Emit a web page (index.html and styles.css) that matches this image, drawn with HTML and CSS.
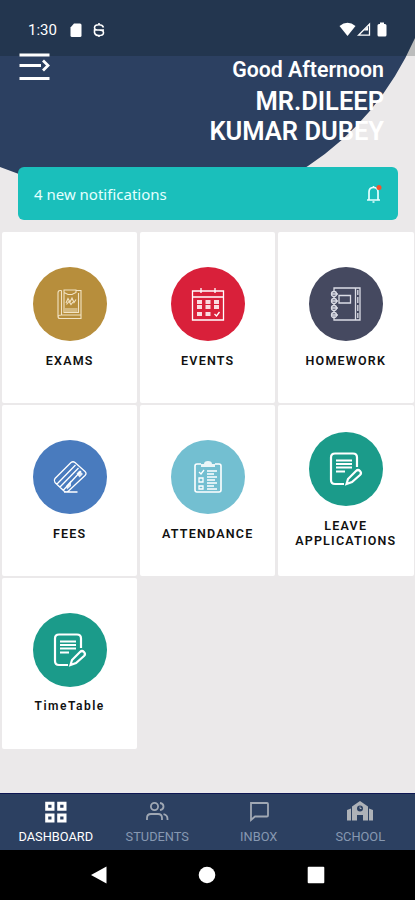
FILE: index.html
```
<!DOCTYPE html>
<html lang="en">
<head>
    <meta charset="UTF-8">
    <meta name="viewport" content="width=device-width, initial-scale=1">
    <title>Dashboard</title>
    <link rel="stylesheet" href="styles.css">
</head>

<body>

<svg class="hero-bg" viewBox="0 0 415 190"><path d="M0 0H415V38Q379 119 308 166Q285 182 250 190H80Q40 183 0 167Z"/></svg>

<div class="status-bar">
    <span class="time">1:30</span>
    <svg class="sd" width="12" height="15" viewBox="0 0 12 15"><path d="M4 0.5H10Q11.5 .5 11.5 2V12.500Q11.500 14 10 14H2Q.5 14 .5 12.500V4.500Z"/></svg>
    <svg class="app" width="12" height="15" viewBox="0 0 12 15"><path d="M10.500 4.500Q9.500 1.800 6 1.800Q1.500 1.800 1.500 4.700Q1.500 7 6 7Q10.500 7 10.500 9.700Q10.500 12.500 6 12.500Q2 12.500 1.500 9.500V7H11M6 0V2M6 12.500V14"/></svg>
    <div class="signals">
        <svg width="48" height="16" viewBox="0 0 48 16">
            <path d="M.5 4Q8.500-2.500 16.500 4L8.500 14Z"/>
            <path class="cell" d="M19.500 13.200L30.500 2V13.200Z"/><path d="M25 8.500L29 4.500V8.500Z"/>
            <path d="M41 .5H45V2H46Q47.500 2 47.500 3.500V13Q47.500 14.500 46 14.500H40Q38.500 14.500 38.500 13V3.500Q38.500 2 40 2H41Z"/>
        </svg>
    </div>
</div>

<header>
    <svg class="menu" width="32" height="30" viewBox="0 0 32 30"><path d="M1.500 3H31.500M1.500 13.500H23M1.500 26.500H31.500M25 8.500L30 13.500L25 18.500"/></svg>
    <div class="greeting">
        <p>Good Afternoon</p>
        <h1>MR.DILEEP<br>KUMAR DUBEY</h1>
    </div>
</header>

<section class="notice">
    <span>4 new notifications</span>
    <svg width="16" height="20" viewBox="0 0 16 20"><path d="M1 16H14M3 16V8Q3 3.500 7.500 3.500Q12 3.500 12 8V16M6.500 18H8.500M7.500 2V3.500"/><circle cx="13" cy="3.500" r="2.500"/></svg>
</section>

<main class="grid">
    <div class="card">
        <div class="icon exams">
            <svg viewBox="0 0 36 36"><path d="M9.500 4.500H8Q6 4.500 6 7V30.500Q6 32.500 8 32.500H29V4.500H24M9.500 4.500V29H29M9.500 29Q6 29 6 31M12 7V26.500H26.500V7M12 4H24V6.500L20 8.500H16L12 6.500ZM14 17L16 12.500L18 16L20 12L22 16.500L24 13.500M14.500 18.500L17 15.500L19 18.500L21 16M13 23H25.500M13 25H25.500"/></svg>
        </div>
        <h3>EXAMS</h3>
    </div>
    <div class="card">
        <div class="icon events">
            <svg viewBox="0 0 36 36"><path d="M2.500 5H33.500V34H2.500ZM2.500 11H33.500M11 2V7M25 2V7"/><path class="fill" d="M7 14h5v4H7zM15.500 14h5v4h-5zM24 14h5v4h-5zM7 19h5v4H7zM15.500 19h5v4h-5zM24 19h5v4h-5zM7 26h5v4H7zM15.500 26h5v4h-5z"/><path d="M24.500 28L26.500 30L29.500 26"/></svg>
        </div>
        <h3>EVENTS</h3>
    </div>
    <div class="card">
        <div class="icon homework">
            <svg viewBox="0 0 36 36"><path d="M6 5V2H32V34H6V30M27.500 2V34M11 9.500H22.500V17H11Z"/><circle cx="6" cy="8" r="2.500"/><circle cx="6" cy="15" r="2.500"/><circle cx="6" cy="22" r="2.500"/><circle cx="6" cy="29" r="2.500"/><path d="M3 8H10M3 15H10M3 22H10M3 29H10M6 11V12M6 18V19M6 25V26M29.800 4V9M29.800 11V17M29.800 19V25M29.800 27V32"/></svg>
        </div>
        <h3>HOMEWORK</h3>
    </div>
    <div class="card">
        <div class="icon fees">
            <svg viewBox="0 0 36 36"><path d="M19 3.500Q21 2 23 3.500L33 12.500Q35 14.500 33 16.500L16.500 32Q14 34 12 32L3 23.500Q1.500 21.500 3 19.500ZM5 25L23.500 6M8 28L26.500 9M11.500 31L29 12M12 33H25.500"/><path class="fill" d="M24.500 14.500L27.500 11.500L31 15L27.500 18.500ZM14 27L19 21.500V27L15 30.500Z"/></svg>
        </div>
        <h3>FEES</h3>
    </div>
    <div class="card">
        <div class="icon attendance">
            <svg viewBox="0 0 36 36"><path class="mid" d="M11 5H7Q5 5 5 7V31Q5 33 7 33H29Q31 33 31 31V7Q31 5 29 5H25"/><path class="fill" d="M11 8V5H14Q14 2 18 2Q22 2 22 5H25V8Z"/><path d="M9 13L11 15L14 11M9 19H13V23H9ZM9 27H13V30H9ZM17 12H27M17 15H24M17 18H27M17 21H25M17 24H27M17 27H24M17 30H27"/></svg>
        </div>
        <h3>ATTENDANCE</h3>
    </div>
    <div class="card">
        <div class="icon form">
            <svg viewBox="0 0 36 36"><path class="bold" d="M16 33H7Q3 33 3 29V6.500Q3 2.500 7 2.500H25Q29 2.500 29 6.500V16M18.500 33L20 28L28 20Q30 18 32 20Q34 22 32 24L24 31Z"/><path class="lines" d="M8 9.500H24M8 13H24M8 16.500H24M8 20.500H17"/></svg>
        </div>
        <h3>LEAVE<br>APPLICATIONS</h3>
    </div>
    <div class="card">
        <div class="icon form">
            <svg viewBox="0 0 36 36"><path class="bold" d="M16 33H7Q3 33 3 29V6.500Q3 2.500 7 2.500H25Q29 2.500 29 6.500V16M18.500 33L20 28L28 20Q30 18 32 20Q34 22 32 24L24 31Z"/><path class="lines" d="M8 9.500H24M8 13H24M8 16.500H24M8 20.500H17"/></svg>
        </div>
        <h3 class="wide">TimeTable</h3>
    </div>
</main>

<nav class="tabs">
    <a class="active">
        <svg width="26" height="24" viewBox="0 0 26 24"><path d="M3.700 3.200H10V9.200H3.700ZM15.700 3.200H22V9.200H15.700ZM3.700 15H10V21H3.700ZM15.700 15H22V21H15.700Z"/></svg>
        <span>DASHBOARD</span>
    </a>
    <a>
        <svg width="26" height="24" viewBox="0 0 26 24"><circle cx="10.500" cy="6.500" r="3.600"/><path d="M3 20V18Q3 14 7 14H14Q18 14 18 18V20M16 3Q19.500 3.500 19.500 6.500Q19.500 9.500 16 10.100M19.500 14.200Q23.500 15 23.500 19V20"/></svg>
        <span>STUDENTS</span>
    </a>
    <a>
        <svg width="26" height="24" viewBox="0 0 26 24"><path d="M5 3H21Q22 3 22 4V15.500Q22 16.500 21 16.500H9L5 20Z"/></svg>
        <span>INBOX</span>
    </a>
    <a>
        <svg class="school" width="28" height="24" viewBox="0 0 28 24"><path d="M1 10L5 8.500V20.500H1ZM23 8.500L27 10V20.500H23ZM6 6.500L14 1L22 6.500V20.500H17V15H11V20.500H6Z"/><circle cx="14" cy="8.500" r="3"/><path class="hand" d="M14 6.500V8.500H15.500"/></svg>
        <span>SCHOOL</span>
    </a>
</nav>

<footer>
    <svg width="16" height="18" viewBox="0 0 16 18"><path d="M0 9L15.500 .5V17.500Z"/></svg>
    <svg width="18" height="18" viewBox="0 0 18 18"><circle cx="9" cy="9" r="8.300"/></svg>
    <svg width="18" height="18" viewBox="0 0 18 18"><rect x=".7" y=".7" width="16.600" height="16.600" rx="1"/></svg>
</footer>

</body>
</html>
```
FILE: styles.css
```
* { margin: 0; padding: 0; box-sizing: border-box; }
body {
    font-family: Roboto, sans-serif; background: #ebe9ea;
    height: 900px; display: flex; flex-direction: column;
    position: relative; overflow: hidden;
}
svg { display: block; flex-shrink: 0; }

.hero-bg {
    position: absolute; top: 0; left: 0; z-index: -1;
    width: 415px; height: 190px; fill: #2c4061;
}

/* Status bar */
.status-bar {
    height: 56px; padding: 4px 27px 0 28px;
    display: flex; align-items: center;
    background: rgba(0,15,10,0.2);
    color: #fff; fill: #fff;
}
.time { font-size: 15px; width: 42px; }
.sd { margin-right: 11px; }
.app { fill: none; stroke: #fff; stroke-width: 1.6; }
.signals { margin-left: auto; margin-right: 1px; }
.cell { fill: none; stroke: #fff; stroke-width: 1.3; }

/* Greeting */
header {
    height: 111px; padding: 0 31px 0 18px;
    display: flex; justify-content: space-between; align-items: flex-start;
    color: #fff;
}
.menu { margin-top: -4px; fill: none; stroke: #fff; stroke-width: 2.8; }
.greeting { text-align: right; }
.greeting p { font-size: 21.300px; line-height: 27px; font-weight: 600; }
.greeting h1 { font-size: 25.500px; line-height: 30px; font-weight: 600; margin-top: 3px; }

.notice {
    height: 53px; margin: 0 17px 12px 18px; padding: 0 16px;
    display: flex; align-items: center; justify-content: space-between;
    background: #1abfbb; color: #e5ffff; border-radius: 6px;
    font-family: "Noto Sans", sans-serif; font-size: 15px;
}
.notice path { fill: none; stroke: #e5ffff; stroke-width: 1.7; }
.notice circle { fill: #f4512c; }

/* Tiles */
.grid {
    flex: 1; padding: 0 1.500px 0 2px;
    display: grid; grid-template-columns: repeat(3, 1fr);
    grid-auto-rows: 170.500px; gap: 2.600px; align-content: start;
}
.card {
    background: #fff; border-radius: 2px;
    display: flex; flex-direction: column;
    align-items: center; justify-content: center; gap: 12px;
}
.card h3 {
    font-size: 12.500px; line-height: 15px; font-weight: 600;
    letter-spacing: 1.200px; text-align: center; color: #111;
}
.card .wide { font-size: 12px; letter-spacing: 1.500px; }
.icon {
    width: 74px; height: 74px; border-radius: 50%;
    display: flex; align-items: center; justify-content: center;
}
.icon svg { width: 36px; height: 36px; fill: none; stroke: #fff; stroke-width: 1.3; }
.icon .fill { fill: #fff; stroke: none; opacity: 0.85; }
.icon .mid { stroke-width: 1.6; }
.icon .bold { stroke-width: 2.2; }
.icon .lines { stroke-width: 2; }
.exams { background: #b78e3c; }
.exams svg { stroke: #f2e3c4; stroke-width: 1.1; }
.events { background: #d9203a; }
.homework { background: #454960; }
.homework svg { stroke: #dcdde6; }
.fees { background: #497bbe; }
.attendance { background: #73bfd1; }
.form { background: #1b9b8a; }

/* Bottom tabs */
.tabs {
    height: 57px; padding: 6px 4px 0 5px; border-top: 1px solid #0d1653;
    display: grid; grid-template-columns: repeat(4, 1fr);
    background: #2c4061;
}
.tabs a {
    display: flex; flex-direction: column; align-items: center;
    font-size: 12.800px; line-height: 16px; color: #8798b1;
}
.tabs svg { margin-bottom: 5px; fill: none; stroke: #a0a8b4; stroke-width: 1.8; }
.tabs .active { color: #fff; }
.tabs .active svg { stroke: #fff; stroke-width: 3; }
.tabs .school { fill: #aeb2b8; stroke: none; }
.school circle { fill: #2c4061; }
.school .hand { fill: none; stroke: #aeb2b8; stroke-width: 1; }

footer {
    height: 50px; padding: 0 90px 0 91px;
    display: flex; align-items: center; justify-content: space-between;
    background: #000; fill: #fff;
}
```
